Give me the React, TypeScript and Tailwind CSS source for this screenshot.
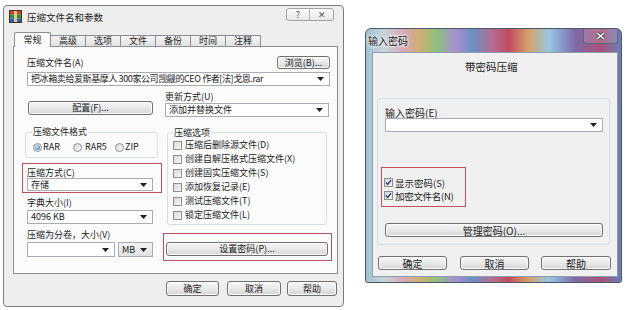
import type { ReactNode } from 'react'

const tabs = ['高级', '选项', '文件', '备份', '时间', '注释']

const options = [
  '压缩后删除源文件(D)',
  '创建自解压格式压缩文件(X)',
  '创建固实压缩文件(S)',
  '添加恢复记录(E)',
  '测试压缩文件(T)',
  '锁定压缩文件(L)',
]

function Arrow() {
  return (
    <svg width="7" height="4" viewBox="0 0 7 4" className="shrink-0">
      <path d="M0 0h7L3.5 4z" fill="#222" />
    </svg>
  )
}

function Btn({ children, className = '' }: { children?: ReactNode; className?: string }) {
  return (
    <div
      className={`flex items-center justify-center rounded-[3px] border border-[#707070] bg-linear-to-b from-[#f6f6f6] via-[#e9e9e9] to-[#d5d5d5] shadow-[inset_0_0_0_1px_#fbfbfb] ${className}`}
    >
      {children}
    </div>
  )
}

function Combo({ text, className = '' }: { text?: string; className?: string }) {
  return (
    <div className={`flex items-center border border-[#a9acb2] pl-[3px] pr-[5px] ${className}`}>
      <span className="flex-1 truncate whitespace-nowrap">{text}</span>
      <Arrow />
    </div>
  )
}

function Check({ checked = false }: { checked?: boolean }) {
  return (
    <span className="flex size-[9px] shrink-0 items-center justify-center border border-[#8e8f8f] bg-linear-to-br from-[#d8d8d8] to-[#f8f8f8]">
      {checked && (
        <svg width="7" height="7" viewBox="0 0 7 7">
          <path d="M1 3.6l1.7 1.8L6 1.2" fill="none" stroke="#2c3f6c" strokeWidth="1.4" />
        </svg>
      )}
    </span>
  )
}

function Radio({ checked = false }: { checked?: boolean }) {
  return (
    <span className="flex size-[9px] shrink-0 items-center justify-center rounded-full border border-[#8e8f8f] bg-linear-to-br from-[#d6d6d6] to-[#fbfbfb]">
      {checked && <span className="size-[5px] rounded-full bg-[radial-gradient(circle_at_35%_35%,#c4e6fa,#2c6cae)]" />}
    </span>
  )
}

function WinRarIcon() {
  return (
    <svg width="13" height="13" viewBox="0 0 13 13" className="shrink-0">
      <rect x="0.5" y="0.5" width="12" height="4" fill="#c8412e" />
      <rect x="0.5" y="4.5" width="12" height="4" fill="#2f8d3c" />
      <rect x="0.5" y="8.5" width="12" height="4" fill="#2c5db3" />
      <rect x="5" y="0.5" width="3" height="12" fill="#e2c78a" />
      <rect x="0.5" y="0.5" width="12" height="12" fill="none" stroke="#4a3320" />
    </svg>
  )
}

function ArchiveDialog() {
  return (
    <div className="ml-[3px] mt-[5px] flex h-[302px] w-[341px] shrink-0 flex-col rounded-[4px] border border-[#7d7d7d] bg-[#eeeeee] text-[9px] leading-[12px]">
      {/* title bar */}
      <div className="flex h-[21px] items-center pl-[5px] pr-[9px]">
        <WinRarIcon />
        <span className="ml-[5px] text-[9.5px]">压缩文件名和参数</span>
        <div className="ml-auto mt-[2px] flex h-[13px] self-start rounded-[3px] border border-[#a3a3a3] bg-linear-to-b from-[#fbfbfb] to-[#e8e8e8] text-[#555]">
          <span className="flex w-[23px] items-center justify-center border-r border-[#b5b5b5]">?</span>
          <span className="flex w-[23px] items-center justify-center">✕</span>
        </div>
      </div>

      <div className="flex flex-col pl-[9px] pr-[5px] pt-[5px]">
        {/* tabs */}
        <div className="flex h-[14px] items-end pl-[1px]">
          <div className="relative z-10 -mb-px flex h-[15px] w-[37px] items-center justify-center rounded-t-[2px] border border-b-0 border-[#8c8e94] bg-[#fbfbfb]">
            常规
          </div>
          {tabs.map((t) => (
            <div
              key={t}
              className="-ml-px flex h-[11px] w-[36px] items-center justify-center border border-b-0 border-[#8c8e94] bg-linear-to-b from-[#f4f4f4] to-[#e2e2e2]"
            >
              {t}
            </div>
          ))}
        </div>

        {/* tab panel */}
        <div className="flex h-[228px] flex-col border border-[#8c8e94] bg-[#fbfbfb] pl-[13px] pr-[7px]">
          <div className="mt-[9px] flex h-[13px] items-center justify-between">
            <span>压缩文件名(A)</span>
            <Btn className="h-[13px] w-[53px]">浏览(B)...</Btn>
          </div>
          <Combo
            className="mt-[3px] h-[14px] bg-white tracking-[-0.4px]"
            text="把冰箱卖给爱斯基摩人 300家公司觊觎的CEO 作者[法]戈恩.rar"
          />

          <div className="mt-[4px] grid grid-cols-[126px_164px] gap-x-[12px]">
            {/* left column */}
            <div className="flex flex-col">
              <Btn className="ml-[1px] mt-[11px] h-[14px] w-[125px]">配置(F)...</Btn>

              <fieldset className="-ml-[2px] mt-[11px] w-[133px] rounded-[3px] border border-[#d5dfe5] pb-[4px] pl-[6px] pt-[3px]">
                <legend className="px-[1px]">压缩文件格式</legend>
                <div className="flex h-[12px] items-center">
                  <span className="ml-[1px] flex w-[40px] items-center">
                    <Radio checked />
                    <span className="ml-[1px]">RAR</span>
                  </span>
                  <span className="flex w-[42px] items-center">
                    <Radio />
                    <span className="ml-[3px]">RAR5</span>
                  </span>
                  <span className="flex items-center">
                    <Radio />
                    <span className="ml-[1px]">ZIP</span>
                  </span>
                </div>
              </fieldset>

              <div className="-ml-[5px] mt-[5px] w-[140px] border border-[#c0525e] pb-[1px] pl-[4px] pt-[3px]">
                <div className="leading-[11px]">压缩方式(C)</div>
                <Combo className="h-[13px] w-[126px] bg-white" text="存储" />
              </div>

              <div className="mt-[4px]">字典大小(I)</div>
              <Combo className="mt-[1px] h-[14px] bg-white" text="4096 KB" />

              <div className="mt-[5px]">压缩为分卷，大小(V)</div>
              <div className="mt-[1px] flex gap-[3px]">
                <Combo className="h-[15px] w-[88px] bg-white" />
                <Combo className="h-[15px] w-[35px] bg-linear-to-b from-[#f4f4f4] to-[#e0e0e0]" text="MB" />
              </div>
            </div>

            {/* right column */}
            <div className="flex flex-col">
              <div className="mt-[1px]">更新方式(U)</div>
              <Combo className="h-[14px] bg-white" text="添加并替换文件" />

              <fieldset className="ml-[2px] mt-[10px] w-[160px] rounded-[3px] border border-[#d5dfe5] pb-[2px] pl-[5px]">
                <legend className="px-[1px] leading-[11px]">压缩选项</legend>
                {options.map((o) => (
                  <div key={o} className="flex h-[14px] items-center">
                    <Check />
                    <span className="ml-[3px] whitespace-nowrap">{o}</span>
                  </div>
                ))}
              </fieldset>

              <div className="-ml-[2px] mt-[8px] w-[169px] border border-[#c0525e] pb-[4px] pl-[2px] pt-[8px]">
                <Btn className="h-[14px] w-[162px]">设置密码(P)...</Btn>
              </div>
            </div>
          </div>
        </div>

        {/* dialog buttons */}
        <div className="ml-[153px] mt-[7px] flex">
          <Btn className="h-[15px] w-[53px]">确定</Btn>
          <Btn className="ml-[8px] h-[15px] w-[54px]">取消</Btn>
          <Btn className="ml-[6px] h-[15px] w-[50px]">帮助</Btn>
        </div>
      </div>
    </div>
  )
}

function PasswordDialog() {
  return (
    <div className="ml-[21px] mt-[28px] flex h-[255px] w-[257px] shrink-0 flex-col rounded-b-[3px] rounded-t-[6px] border border-[#4d5866] bg-[linear-gradient(90deg,#9fc3d2_0%,#c6d3dc_7%,#d9a7b6_15%,#cfae72_21%,#8cc07c_28%,#a98fd0_35%,#6b8fc4_42%,#b86a8e_50%,#c24a5e_56%,#d4a46a_64%,#96c6e6_72%,#7e6aa8_82%,#a85277_92%,#6a7fb8_100%)] text-[10px] leading-[13px]">
      {/* title bar */}
      <div className="flex h-[23px] items-center pl-[2px] pr-[3px]">
        <span className="text-[#111] [text-shadow:0_0_5px_#fff,0_0_3px_#fff,0_0_2px_#fff]">输入密码</span>
        <div className="ml-auto flex h-[15px] w-[35px] items-center justify-center self-start rounded-b-[3px] border border-t-0 border-[#5d6878] bg-white/15">
          <svg width="9" height="8" viewBox="0 0 9 8">
            <path d="M1 1l7 6M8 1L1 7" stroke="#39404a" strokeWidth="3" />
            <path d="M1 1l7 6M8 1L1 7" stroke="#fff" strokeWidth="1.6" />
          </svg>
        </div>
      </div>

      {/* client area */}
      <div className="ml-[6px] mr-[3px] flex h-[225px] flex-col border border-[#8f9cab] bg-[#f0f0f0]">
        <div className="mt-[7px] pl-[92px] text-[10.5px]">带密码压缩</div>

        <div className="ml-[4px] mt-[25px] flex w-[233px] flex-col rounded-[3px] border border-[#d5dfe5] pb-[7px] pl-[7px] pt-[7px]">
          <div>输入密码(E)</div>
          <Combo className="-mt-[1px] h-[14px] w-[218px] bg-white" />

          <div className="-ml-[4px] mt-[35px] w-[85px] border border-[#c0525e] pb-[4px] pl-[2px] pt-[8px] text-[9.5px] leading-[12px]">
            <div className="flex h-[13px] items-center">
              <Check checked />
              <span className="ml-[2px] whitespace-nowrap">显示密码(S)</span>
            </div>
            <div className="flex h-[13px] items-center">
              <Check checked />
              <span className="ml-[2px] whitespace-nowrap tracking-[-0.3px]">加密文件名(N)</span>
            </div>
          </div>

          <Btn className="mt-[16px] h-[14px] w-[218px]">管理密码(O)...</Btn>
        </div>

        <div className="ml-[5px] mt-[11px] flex">
          <Btn className="h-[14px] w-[69px]">确定</Btn>
          <Btn className="ml-[13px] h-[14px] w-[69px]">取消</Btn>
          <Btn className="ml-[12px] h-[14px] w-[70px]">帮助</Btn>
        </div>
      </div>
    </div>
  )
}

export default function App() {
  return (
    <div className="flex h-[310px] w-[640px] items-start overflow-hidden bg-white font-['Noto_Sans_CJK_SC',sans-serif] text-[#1b1b1b]">
      <ArchiveDialog />
      <PasswordDialog />
    </div>
  )
}
